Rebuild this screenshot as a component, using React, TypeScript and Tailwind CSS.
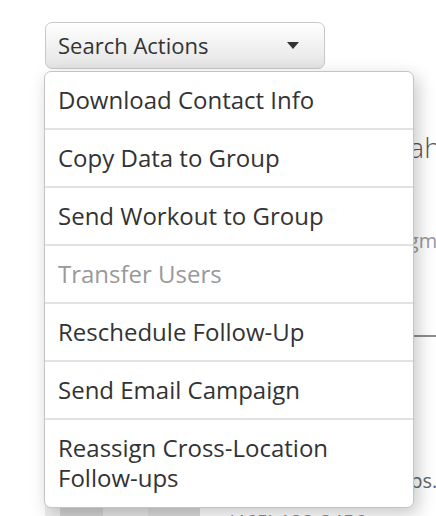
const actions = [
  { label: "Download Contact Info" },
  { label: "Copy Data to Group" },
  { label: "Send Workout to Group" },
  { label: "Transfer Users", disabled: true },
  { label: "Reschedule Follow-Up" },
  { label: "Send Email Campaign" },
  { label: "Reassign Cross-Location Follow-ups" },
];

const Caret = () => (
  <svg width="12" height="7" viewBox="0 0 12 7" className="fill-[#333]">
    <path d="M0 0h12L6 7z" />
  </svg>
);

export default function App() {
  return (
    <div className="relative h-[516px] w-[436px] overflow-hidden bg-white pl-[45px] pt-[22px] font-['Open_Sans',sans-serif]">
      <div className="relative w-[280px]">
        <button className="flex h-[47px] w-[280px] items-center justify-between rounded-[7px] border border-[#c8c8c8] bg-gradient-to-b from-white to-[#e4e4e4] pl-[12px] pr-[25px] text-[22px] text-[#333]">
          <span>Search Actions</span>
          <Caret />
        </button>

        <div className="absolute left-[-1px] top-[49px] z-10 w-[370px] rounded-[7px] border-[1.5px] border-[#c4c4c4] bg-white shadow-[4px_6px_18px_rgba(0,0,0,0.22)]">
          {actions.map((a, i) => (
            <div
              key={a.label}
              className={
                i < actions.length - 1
                  ? "border-b-2 border-[#e2e2e2] px-[13px] py-[13px] text-[24px] leading-[30px] " +
                    (a.disabled ? "text-[#999]" : "text-[#333]")
                  : "px-[13px] pb-[14px] pt-[13px] text-[24px] leading-[30px] text-[#333]"
              }
            >
              {i === actions.length - 1 ? (
                <>
                  Reassign Cross-Location
                  <br />
                  Follow-ups
                </>
              ) : (
                a.label
              )}
            </div>
          ))}
        </div>
      </div>

      {/* page content behind the menu */}
      <div className="mt-[60px] flex gap-[28px]">
        <div className="flex h-[396px] w-[155px] shrink-0 flex-col justify-end">
          <div className="flex h-[20px]">
            <div className="w-[15px] bg-[#eee]" />
            <div className="w-[43px] bg-[#d4d4d4]" />
            <div className="w-[45px] bg-[#e6e6e6]" />
            <div className="w-[52px] bg-[#dcdcdc]" />
          </div>
        </div>
        <div className="flex min-w-0 flex-col whitespace-nowrap">
          <div className="ml-[8px] text-[28px] font-light leading-[36px] text-[#555]">Alexandra Jonah</div>
          <div className="ml-[34px] mt-[62px] text-[20px] leading-[28px] text-[#999]">Membership Segment</div>
          <div className="mt-[80px] h-[2px] w-[260px] bg-[#8e8e8e]" />
          <div className="ml-[22px] mt-[130px] text-[20px] leading-[28px] text-[#666]">No open follow-ups.</div>
          <div className="mt-[13px] text-[20px] leading-[28px] text-[#888]">(465) 123-3456</div>
        </div>
      </div>
    </div>
  );
}
